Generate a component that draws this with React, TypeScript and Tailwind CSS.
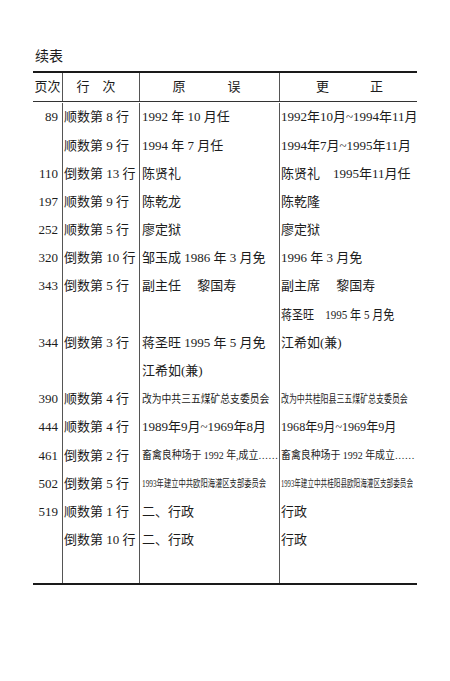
import type { ReactNode } from "react";

type Line = [ReactNode, ReactNode, ReactNode, ReactNode];

const Squeeze = ({ children, size, scale }: { children: ReactNode; size: string; scale: string }) => (
  <span className={`inline-block origin-left whitespace-nowrap ${size} ${scale}`}>{children}</span>
);

const lines: Line[] = [
  ["89", "顺数第 8 行", "1992 年 10 月任", "1992年10月~1994年11月"],
  ["", "顺数第 9 行", "1994 年 7 月任", "1994年7月~1995年11月"],
  ["110", "倒数第 13 行", "陈贤礼", "陈贤礼　1995年11月任"],
  ["197", "顺数第 9 行", "陈乾龙", "陈乾隆"],
  ["252", "顺数第 5 行", "廖定狱", "廖定狱"],
  ["320", "倒数第 10 行", "邹玉成  1986 年 3 月免", "1996 年 3 月免"],
  ["343", "倒数第 5 行", "副主任　 黎国寿", "副主席　 黎国寿"],
  ["", "", "", <Squeeze size="text-[13px]" scale="scale-x-[0.85]">蒋圣旺　1995 年 5 月免</Squeeze>],
  ["344", "倒数第 3 行", "蒋圣旺 1995 年 5 月免", "江希如(兼)"],
  ["", "", "江希如(兼)", ""],
  [
    "390",
    "顺数第 4 行",
    <Squeeze size="text-[11px]" scale="scale-x-[0.89]">改为中共三五煤矿总支委员会</Squeeze>,
    <Squeeze size="text-[11px]" scale="scale-x-[0.72]">改为中共桂阳县三五煤矿总支委员会</Squeeze>,
  ],
  [
    "444",
    "顺数第 4 行",
    <Squeeze size="text-[13px]" scale="scale-x-[1]">1989年9月~1969年8月</Squeeze>,
    <Squeeze size="text-[13px]" scale="scale-x-[0.93]">1968年9月~1969年9月</Squeeze>,
  ],
  [
    "461",
    "倒数第 2 行",
    <Squeeze size="text-[11px]" scale="scale-x-[0.9]">畜禽良种场于 1992 年,成立……</Squeeze>,
    <Squeeze size="text-[11px]" scale="scale-x-[0.9]">畜禽良种场于 1992 年成立……</Squeeze>,
  ],
  [
    "502",
    "倒数第 5 行",
    <Squeeze size="text-[10px]" scale="scale-x-[0.73]">1993年建立中共欧阳海灌区支部委员会</Squeeze>,
    <Squeeze size="text-[10px]" scale="scale-x-[0.66]">1993年建立中共桂阳县欧阳海灌区支部委员会</Squeeze>,
  ],
  ["519", "顺数第 1 行", "二、行政", "行政"],
  ["", "倒数第 10 行", "二、行政", "行政"],
];

export default function App() {
  return (
    <div
      className="min-h-screen w-[450px] bg-white pl-[33px] pt-[49px] text-[13px] text-[#1c1c1c]"
      style={{ fontFamily: '"Liberation Serif", "Noto Sans CJK SC", serif' }}
    >
      <div className="mb-[6px] pl-[2px] text-[14px] leading-[16px]">续表</div>

      <div className="w-[384px] border-t-2 border-b-2 border-[#1a1a1a]">
        {/* header */}
        <div className="grid h-[29px] grid-cols-[29px_77px_140px_138px] border-b border-[#333]">
          <div className="flex items-center justify-center whitespace-nowrap">页次</div>
          <div className="flex items-center justify-center gap-[13px] border-l border-[#555] pr-[10px]">
            <span>行</span>
            <span>次</span>
          </div>
          <div className="flex items-center justify-center gap-[42px] border-l border-[#555] pr-[6px]">
            <span>原</span>
            <span>误</span>
          </div>
          <div className="flex items-center justify-center gap-[41px] border-l border-[#555] pl-[2px]">
            <span>更</span>
            <span>正</span>
          </div>
        </div>

        {/* body */}
        <div className="pt-px">
          {lines.map((l, i) => (
            <div key={i} className="grid h-[28.2px] grid-cols-[29px_77px_140px_138px]">
              <div className="flex items-center justify-end pr-[4px]">{l[0]}</div>
              <div className="flex items-center whitespace-nowrap border-l border-[#555] pl-px">{l[1]}</div>
              <div className="flex items-center whitespace-nowrap border-l border-[#555] pl-[2px]">{l[2]}</div>
              <div className="flex items-center whitespace-nowrap border-l border-[#555] pl-px">{l[3]}</div>
            </div>
          ))}
          <div className="grid h-[29px] grid-cols-[29px_77px_140px_138px]">
            <div />
            <div className="border-l border-[#555]" />
            <div className="border-l border-[#555]" />
            <div className="border-l border-[#555]" />
          </div>
        </div>
      </div>
    </div>
  );
}
